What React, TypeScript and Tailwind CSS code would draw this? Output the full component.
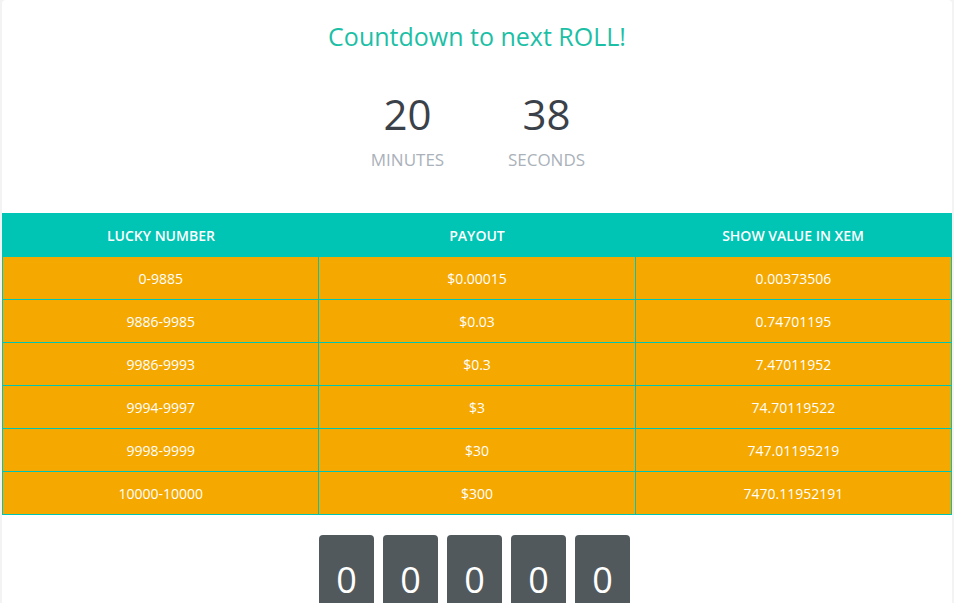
const ROWS = [
  { range: "0-9885", payout: "$0.00015", xem: "0.00373506" },
  { range: "9886-9985", payout: "$0.03", xem: "0.74701195" },
  { range: "9986-9993", payout: "$0.3", xem: "7.47011952" },
  { range: "9994-9997", payout: "$3", xem: "74.70119522" },
  { range: "9998-9999", payout: "$30", xem: "747.01195219" },
  { range: "10000-10000", payout: "$300", xem: "7470.11952191" }
];

const DIGITS = ["0", "0", "0", "0", "0"];

export default function App() {
  return (
    <div className="min-h-screen bg-[#f3f3f3] px-[2px] font-['Open_Sans',sans-serif]">
      <div className="min-h-[603px] overflow-hidden rounded-t-[4px] bg-white">
        <h2 className="pt-[19px] text-center text-[25px] leading-[34px] text-[#1cbfa6]">Countdown to next ROLL!</h2>

        <div className="mt-[40px] flex justify-center">
          <div className="w-[139px] text-center">
            <p className="text-[42px] leading-[42px] text-[#3b4149]">20</p>
            <p className="mt-[14px] text-[17px] leading-[22px] text-[#aab1ba]">MINUTES</p>
          </div>
          <div className="w-[139px] text-center">
            <p className="text-[42px] leading-[42px] text-[#3b4149]">38</p>
            <p className="mt-[14px] text-[17px] leading-[22px] text-[#aab1ba]">SECONDS</p>
          </div>
        </div>

        <table className="mt-[42px] w-full table-fixed border-collapse border border-[#00c4b4] text-[14px] text-white">
          <thead className="bg-[#00c4b4]">
            <tr>
              <th className="h-[43px] font-semibold">LUCKY NUMBER</th>
              <th className="h-[43px] font-semibold">PAYOUT</th>
              <th className="h-[43px] font-semibold">SHOW VALUE IN XEM</th>
            </tr>
          </thead>
          <tbody className="bg-[#f5a800]">
            {ROWS.map((row) => (
              <tr key={row.range}>
                <td className="h-[43px] border border-[#00c4b4] text-center">{row.range}</td>
                <td className="h-[43px] border border-[#00c4b4] text-center">{row.payout}</td>
                <td className="h-[43px] border border-[#00c4b4] text-center">{row.xem}</td>
              </tr>
            ))}
          </tbody>
        </table>

        <div className="mt-[20px] flex justify-center gap-[9px] pr-[5px]">
          {DIGITS.map((d, i) => (
            <div
              key={i}
              className="flex h-[80px] w-[55px] items-start justify-center rounded-[4px] bg-[#52595d] pt-[23px] text-[36px] leading-[44px] text-white"
            >
              {d}
            </div>
          ))}
        </div>
      </div>
    </div>
  );
}
